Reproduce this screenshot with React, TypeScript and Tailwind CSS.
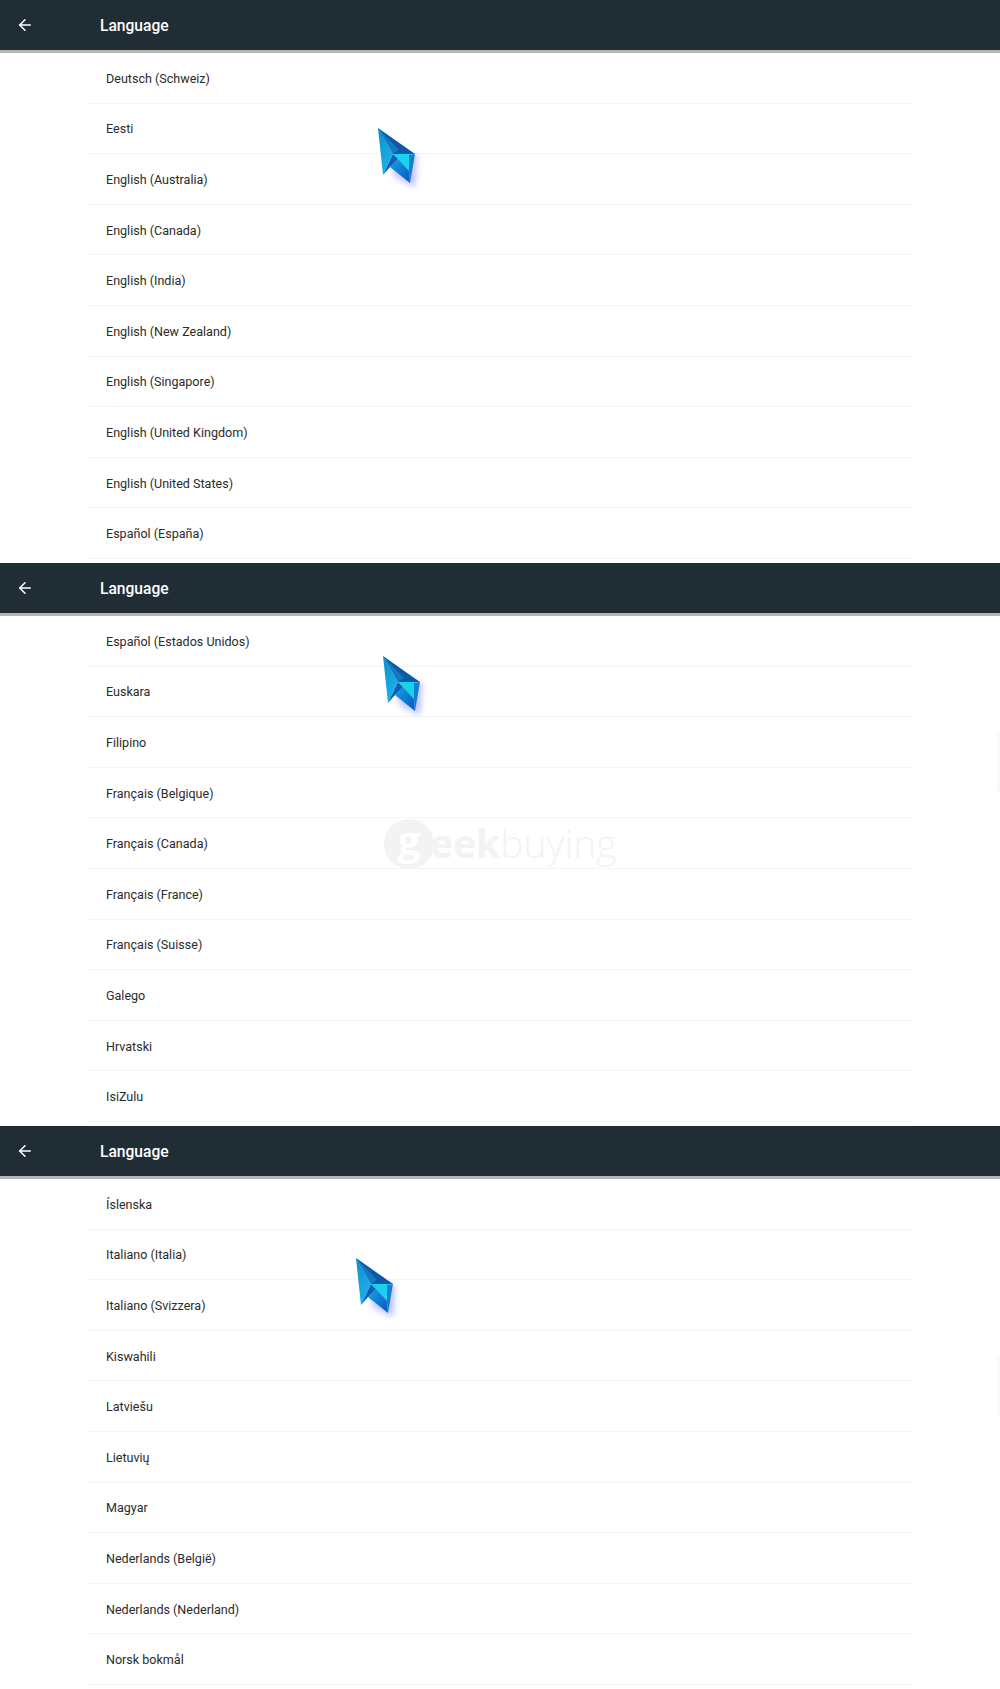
import { ArrowLeft } from "lucide-react";

const sections = [
  {
    cursor: "left-[377px] top-[127px]",
    items: ["Deutsch (Schweiz)", "Eesti", "English (Australia)", "English (Canada)", "English (India)", "English (New Zealand)", "English (Singapore)", "English (United Kingdom)", "English (United States)", "Español (España)"],
  },
  {
    cursor: "left-[382px] top-[92px]",
    items: ["Español (Estados Unidos)", "Euskara", "Filipino", "Français (Belgique)", "Français (Canada)", "Français (France)", "Français (Suisse)", "Galego", "Hrvatski", "IsiZulu"],
  },
  {
    cursor: "left-[355px] top-[131px]",
    items: ["Íslenska", "Italiano (Italia)", "Italiano (Svizzera)", "Kiswahili", "Latviešu", "Lietuvių", "Magyar", "Nederlands (België)", "Nederlands (Nederland)", "Norsk bokmål"],
  },
];

const Cursor = ({ className, id }: { className: string; id: string }) => (
  <svg className={`absolute ${className}`} width="48" height="66" viewBox="0 0 48 66">
    <defs>
      <linearGradient id={`${id}-a`} x1="0" y1="0" x2="0.5" y2="1">
        <stop offset="0" stopColor="#0f8ccc" />
        <stop offset="1" stopColor="#1cb2e8" />
      </linearGradient>
      <linearGradient id={`${id}-b`} x1="0" y1="0" x2="1" y2="1">
        <stop offset="0" stopColor="#12a4e0" />
        <stop offset="1" stopColor="#0a55c4" />
      </linearGradient>
      <filter id={`${id}-s`} x="-30%" y="-30%" width="160%" height="160%">
        <feGaussianBlur stdDeviation="3" />
      </filter>
    </defs>
    <polygon points="14,30 40,28 38,60 18,50" fill="#5560ff" opacity="0.4" filter={`url(#${id}-s)`} />
    <polygon points="1,1 38,27 16,27" fill="#0b5aa8" />
    <polygon points="1,1 22,23 16,27" fill="#1479c0" />
    <polygon points="1,1 16,27 6,48" fill={`url(#${id}-a)`} />
    <polygon points="16,27 38,27 32,28 32,44 21,32" fill="#18d2ee" />
    <polygon points="21,32 32,44 33,56 13,40" fill={`url(#${id}-b)`} />
    <polygon points="32,28 38,27 33,56 32,44" fill="#0f7fd0" />
    <polygon points="16,27 21,32 13,40 6,48" fill="#0b5fb4" />
  </svg>
);

const Watermark = () => (
  <div className="absolute left-[384px] top-[256px] flex items-center text-[#f3f3f3] font-['Open_Sans',sans-serif]">
    <div className="w-[50px] h-[50px] rounded-full bg-[#f3f3f3] flex items-center justify-center text-[40px] font-bold text-white leading-none pb-2">g</div>
    <span className="text-[39px] leading-none font-bold -ml-1 pb-1">eek</span>
    <span className="text-[39px] leading-none font-light pb-1">buying</span>
  </div>
);

export default function App() {
  return (
    <div className="w-[1000px] h-[1689px] bg-white overflow-hidden font-['Roboto',sans-serif]">
      {sections.map((s, i) => (
        <section key={i} className="relative h-[563px]">
          <header className="h-[50px] bg-[#212d35] flex items-center text-white">
            <div className="w-[100px] pl-[16px]">
              <ArrowLeft size={18} strokeWidth={2} />
            </div>
            <h1 className="text-[15.6px] font-medium pt-[3px]">Language</h1>
          </header>
          <div className="h-[3px] bg-[#b5b5b5]" />
          <ul className="mx-[88px]">
            {s.items.map((item) => (
              <li key={item} className="h-[50.6px] flex items-center pl-[18px] pt-[3px] text-[12.55px] text-[#2b2b2b] border-b border-[#f5f5f5]">
                {item}
              </li>
            ))}
          </ul>
          {i === 1 && <Watermark />}
          {i === 1 && <div className="absolute right-0 top-[170px] w-[3px] h-[59px] border border-[#f6f6f6]" />}
          {i === 2 && <div className="absolute right-0 top-[232px] w-[3px] h-[59px] border border-[#f6f6f6]" />}
          <Cursor className={s.cursor} id={`c${i}`} />
        </section>
      ))}
    </div>
  );
}
